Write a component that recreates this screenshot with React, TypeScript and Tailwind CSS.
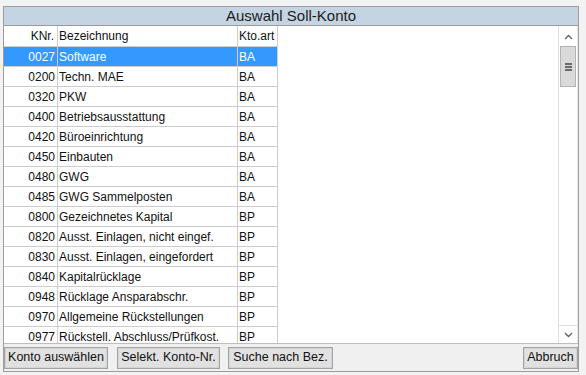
import React from "react";

type Konto = { nr: string; bez: string; art: string };

const konten: Konto[] = [
  { nr: "0027", bez: "Software", art: "BA" },
  { nr: "0200", bez: "Techn. MAE", art: "BA" },
  { nr: "0320", bez: "PKW", art: "BA" },
  { nr: "0400", bez: "Betriebsausstattung", art: "BA" },
  { nr: "0420", bez: "Büroeinrichtung", art: "BA" },
  { nr: "0450", bez: "Einbauten", art: "BA" },
  { nr: "0480", bez: "GWG", art: "BA" },
  { nr: "0485", bez: "GWG Sammelposten", art: "BA" },
  { nr: "0800", bez: "Gezeichnetes Kapital", art: "BP" },
  { nr: "0820", bez: "Ausst. Einlagen, nicht eingef.", art: "BP" },
  { nr: "0830", bez: "Ausst. Einlagen, eingefordert", art: "BP" },
  { nr: "0840", bez: "Kapitalrücklage", art: "BP" },
  { nr: "0948", bez: "Rücklage Ansparabschr.", art: "BP" },
  { nr: "0970", bez: "Allgemeine Rückstellungen", art: "BP" },
  { nr: "0977", bez: "Rückstell. Abschluss/Prüfkost.", art: "BP" },
];

function Btn({ label, w }: { label: string; w: string }) {
  return (
    <button
      className={`${w} h-[22px] bg-[#e1e1e1] border border-[#a3a3a3] shadow-[inset_0_0_0_1px_#d4d4d4] text-[12.5px] text-[#111] leading-none whitespace-nowrap`}
    >
      {label}
    </button>
  );
}

export default function App() {
  return (
    <div className="w-[586px] h-[375px] bg-[#f2f2f2] pt-[6px] pl-[3px] font-['Liberation_Sans',Arial,sans-serif] text-[12px] text-[#111]">
      <div className="w-[576px] h-[366px] border border-[#9d9d9d] bg-[#f0f0f0] flex flex-col">
        <div className="h-[19px] shrink-0 bg-[#c4d4e3] border-b border-[#9a9a9a] flex items-center justify-center text-[15px] text-[#1c1c1c]">
          Auswahl Soll-Konto
        </div>

        <div className="h-[318px] shrink-0 bg-white flex border-b border-[#bdbdbd] overflow-hidden">
          <div className="w-[274px] flex flex-col">
            <div className="h-[21px] shrink-0 flex border-b border-[#cdcdcd]">
              <div className="w-[54px] border-r border-[#cdcdcd] flex items-center justify-end pr-[3px]">KNr.</div>
              <div className="w-[180px] border-r border-[#cdcdcd] flex items-center pl-[1px]">Bezeichnung</div>
              <div className="w-[40px] border-r border-[#cdcdcd] flex items-center pl-[1px]">Kto.art</div>
            </div>
            {konten.map((k, i) => {
              const sel = i === 0;
              return (
                <div
                  key={k.nr}
                  className={`h-[20px] shrink-0 flex border-b border-[#cdcdcd] ${sel ? "bg-[#3399ff] text-white" : ""}`}
                >
                  <div className="w-[54px] border-r border-[#cdcdcd] flex items-center justify-end pr-[2px]">{k.nr}</div>
                  <div className="w-[180px] border-r border-[#cdcdcd] flex items-center pl-[1px] whitespace-nowrap">{k.bez}</div>
                  <div className="w-[40px] border-r border-[#cdcdcd] flex items-center pl-[1px]">{k.art}</div>
                </div>
              );
            })}
          </div>

          <div className="flex-1" />

          <div className="w-[20px] flex flex-col border-l border-[#dedede] border-r border-r-[#e6e6e6] pt-[1px]">
            <div className="h-[19px] flex items-center justify-center">
              <svg width="9" height="6" viewBox="0 0 9 6">
                <path d="M1 5 L4.5 1.5 L8 5" fill="none" stroke="#606060" strokeWidth="1.3" />
              </svg>
            </div>
            <div className="h-[41px] mx-[1px] bg-[#dadada] border border-[#b4b4b4] flex flex-col items-center justify-center gap-[1px]">
              <div className="w-[7px] h-[2px] bg-[#6a6a6a]" />
              <div className="w-[7px] h-[2px] bg-[#6a6a6a]" />
              <div className="w-[7px] h-[2px] bg-[#6a6a6a]" />
            </div>
            <div className="flex-1" />
            <div className="h-[18px] flex items-center justify-center border-t border-[#e2e2e2]">
              <svg width="9" height="6" viewBox="0 0 9 6">
                <path d="M1 1 L4.5 4.5 L8 1" fill="none" stroke="#606060" strokeWidth="1.3" />
              </svg>
            </div>
          </div>
        </div>

        <div className="flex-1 flex items-center">
          <Btn label="Konto auswählen" w="w-[104px]" />
          <div className="w-[9px]" />
          <Btn label="Selekt. Konto-Nr." w="w-[103px]" />
          <div className="w-[8px]" />
          <Btn label="Suche nach Bez." w="w-[105px]" />
          <div className="flex-1" />
          <Btn label="Abbruch" w="w-[55px]" />
        </div>
      </div>
    </div>
  );
}
